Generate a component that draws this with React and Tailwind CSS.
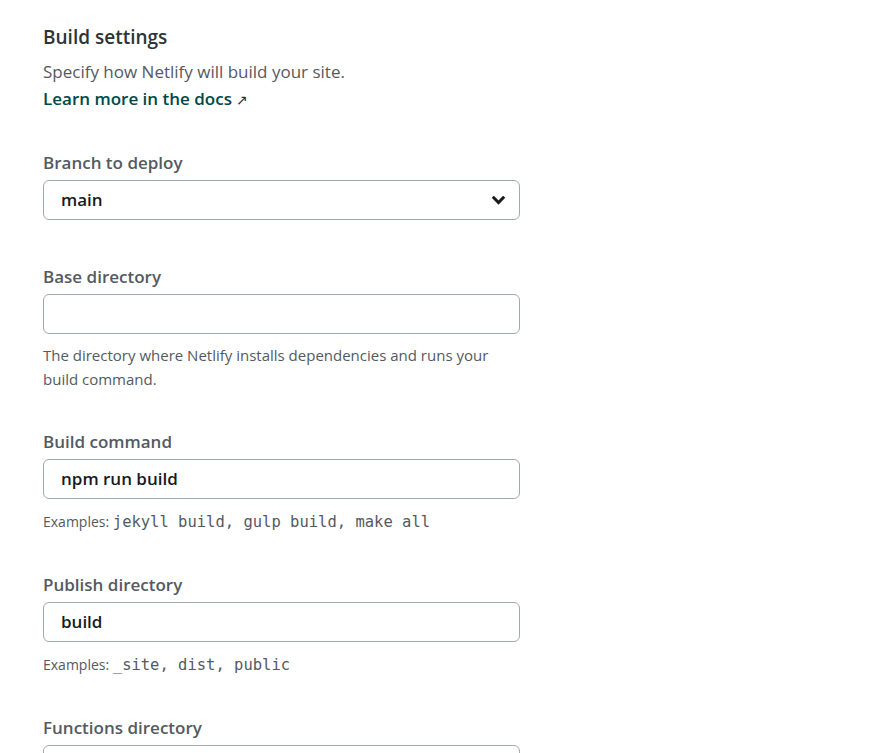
const font = { fontFamily: '"Open Sans", "Noto Sans", sans-serif' };
const mono = { fontFamily: '"DejaVu Sans Mono", "Liberation Mono", monospace' };

const Label = ({ children }) => (
  <label className="block text-[17px] leading-6 font-semibold text-[#545a61] mb-[5px]">{children}</label>
);

const Input = ({ value }) => (
  <div className="h-10 w-[477px] rounded-md border border-[#a3a9ac] bg-white flex items-center px-[17px] text-[17px] font-semibold text-[#181a1c]">
    {value}
  </div>
);

const Examples = ({ code }) => (
  <p className="mt-[11px] text-[14px] leading-6 text-[#545a61]">
    Examples: <code className="text-[15.5px] font-medium text-[#545a61]" style={mono}>{code}</code>
  </p>
);

export default function App() {
  return (
    <div className="min-h-screen bg-white pl-[43px] pt-[23px]" style={font}>
      <h2 className="text-[19px] leading-7 font-semibold text-[#2e3338]">Build settings</h2>
      <p className="mt-[7px] text-[17px] leading-[27px] text-[#545a61]">Specify how Netlify will build your site.</p>
      <a className="block text-[17px] leading-[27px] font-semibold text-[#014847]">
        Learn more in the docs <span className="font-normal text-[14px] text-[#2e3338]">↗</span>
      </a>

      <div className="mt-[38px]">
        <Label>Branch to deploy</Label>
        <div className="h-10 w-[477px] rounded-md border border-[#a3a9ac] bg-white flex items-center justify-between pl-[17px] pr-[14px] text-[17px] font-semibold text-[#181a1c]">
          <span>main</span>
          <svg width="13" height="9" viewBox="0 0 13 9" fill="none">
            <path d="M1.8 1.8 L6.5 6.6 L11.2 1.8" stroke="#181a1c" strokeWidth="3" strokeLinecap="square" strokeLinejoin="miter" />
          </svg>
        </div>
      </div>

      <div className="mt-[45px]">
        <Label>Base directory</Label>
        <Input value="" />
        <p className="mt-[9px] text-[15px] leading-6 text-[#545a61] w-[460px]">
          The directory where Netlify installs dependencies and runs your build command.
        </p>
      </div>

      <div className="mt-[39px]">
        <Label>Build command</Label>
        <Input value="npm run build" />
        <Examples code="jekyll build, gulp build, make all" />
      </div>

      <div className="mt-[39px]">
        <Label>Publish directory</Label>
        <Input value="build" />
        <Examples code="_site, dist, public" />
      </div>

      <div className="mt-[39px]">
        <Label>Functions directory</Label>
        <Input value="" />
      </div>
    </div>
  );
}
